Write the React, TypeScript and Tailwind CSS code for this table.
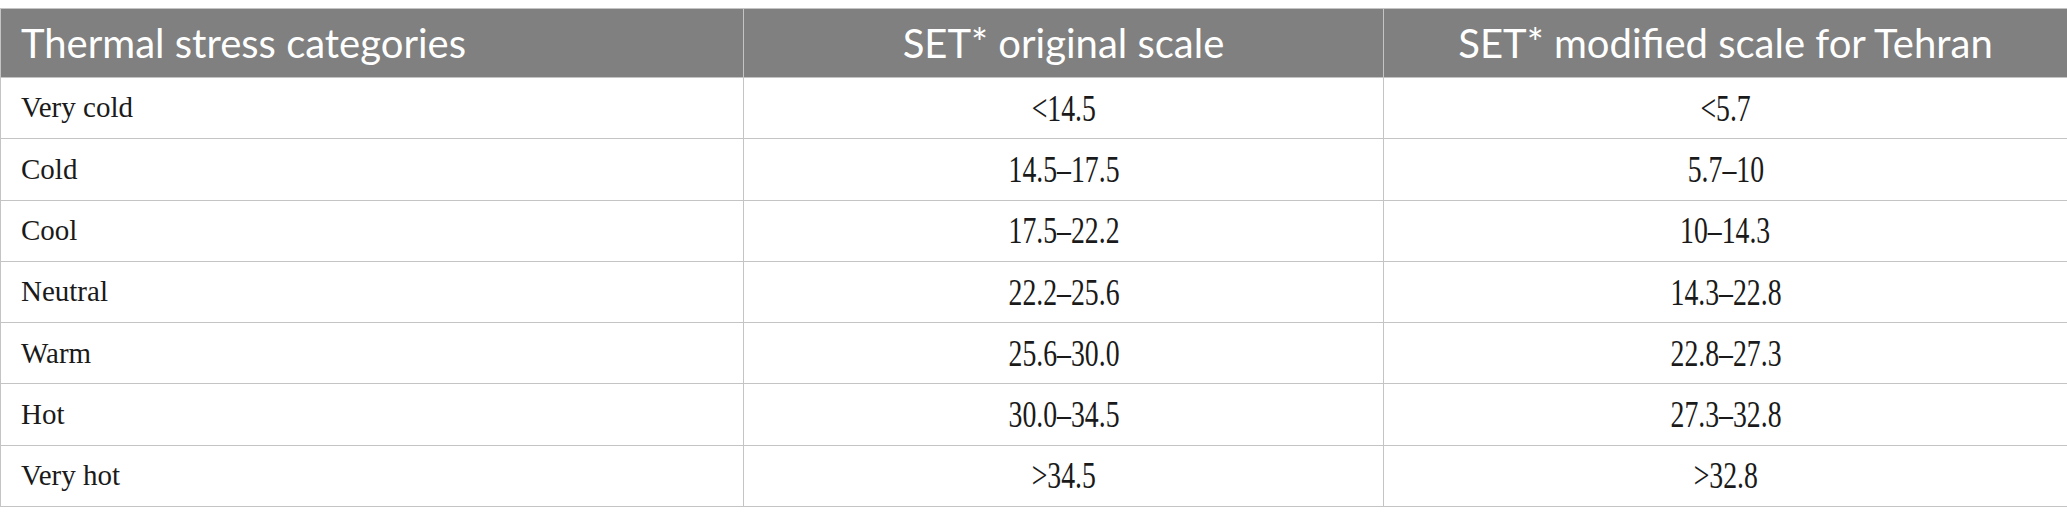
import React from 'react';

// ─── DATA ──────────────────────────────────────

const rows = [
  { label: 'Very cold', original: '<14.5', tehran: '<5.7' },
  { label: 'Cold', original: '14.5–17.5', tehran: '5.7–10' },
  { label: 'Cool', original: '17.5–22.2', tehran: '10–14.3' },
  { label: 'Neutral', original: '22.2–25.6', tehran: '14.3–22.8' },
  { label: 'Warm', original: '25.6–30.0', tehran: '22.8–27.3' },
  { label: 'Hot', original: '30.0–34.5', tehran: '27.3–32.8' },
  { label: 'Very hot', original: '>34.5', tehran: '>32.8' },
];

const headFont = "font-['Lato','Open_Sans',sans-serif]";
const bodyFont = "font-['Liberation_Serif','Times_New_Roman',serif]";

function Num({ value }: { value: string }) {
  return (
    <span className={`inline-block ${bodyFont} text-[37px] leading-none scale-x-[0.75] text-[#1a1a1a]`}>
      {value}
    </span>
  );
}

export default function App() {
  return (
    <div className="w-[2067px] h-[525px] bg-white pt-[8px]">
      <table className="w-[2067px] border-collapse table-fixed">
        <colgroup>
          <col className="w-[743px]" />
          <col className="w-[640px]" />
          <col className="w-[684px]" />
        </colgroup>
        <thead>
          <tr className="h-[69px] bg-[#808080]">
            <th className={`border border-[#c4c4c4] pl-[20px] text-left align-middle font-normal text-white text-[40px] ${headFont}`}>
              Thermal stress categories
            </th>
            <th className={`border border-[#c4c4c4] text-center align-middle font-normal text-white text-[40px] ${headFont}`}>
              SET* original scale
            </th>
            <th className={`border border-[#c4c4c4] text-center align-middle font-normal text-white text-[40px] ${headFont}`}>
              SET* modified scale for Tehran
            </th>
          </tr>
        </thead>
        <tbody>
          {rows.map(r => (
            <tr key={r.label} className="h-[61.3px]">
              <td className={`border border-[#c4c4c4] pl-[20px] align-middle text-[29px] text-[#1a1a1a] ${bodyFont}`}>
                {r.label}
              </td>
              <td className="border border-[#c4c4c4] text-center align-middle">
                <Num value={r.original} />
              </td>
              <td className="border border-[#c4c4c4] text-center align-middle">
                <Num value={r.tehran} />
              </td>
            </tr>
          ))}
        </tbody>
      </table>
    </div>
  );
}
